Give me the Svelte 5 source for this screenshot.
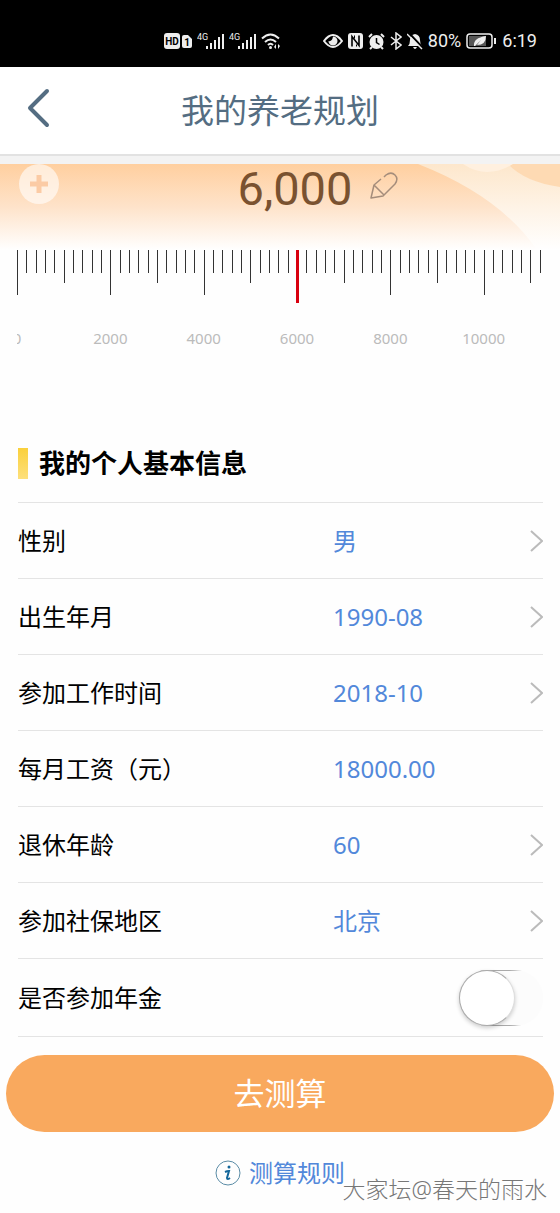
<script lang="ts">
  type Row = { id: string; label: string; value: string; editable?: boolean };

  let amount = $state(6000);
  let annuity = $state(false);

  let rows: Row[] = $state([
    { id: 'gender', label: '性别', value: '男' },
    { id: 'birth', label: '出生年月', value: '1990-08' },
    { id: 'work', label: '参加工作时间', value: '2018-10' },
    { id: 'salary', label: '每月工资（元）', value: '18000.00', editable: true },
    { id: 'retire', label: '退休年龄', value: '60' },
    { id: 'region', label: '参加社保地区', value: '北京' },
  ]);

  // one tick per 200, a long one every 2000
  const STEP = 28 / 3;
  const ticks = Array.from({ length: 57 }, (_, i) => i);
  const marks = [0, 2000, 4000, 6000, 8000, 10000];
  const bars = [0, 1, 2, 3, 4];

  function tickHeight(i: number) {
    if (i % 10 === 0) return 45;
    if (i % 5 === 0) return 33;
    return 23;
  }
</script>

<div class="page">
  <div class="status">
    <div class="status-group">
      <svg width="28" height="16" viewBox="0 0 28 16">
        <rect x="0" y="0" width="16" height="16" rx="3" fill="#eee" />
        <text x="8" y="12" class="hd">HD</text>
        <path d="M18 4q0-2 2-2h4l4 4v7q0 2-2 2h-6q-2 0-2-2z" fill="#eee" />
        <text x="23" y="13" class="hd">1</text>
      </svg>
      {#each [0, 1] as sim}
        <svg width="27" height="18" viewBox="0 0 27 18">
          <text x="0" y="8" class="net">4G</text>
          {#each bars as b}
            <rect x={9 + b * 4} y={14 - b * 3} width="2" height={3 + b * 3} fill="#eee" />
          {/each}
        </svg>
      {/each}
      <svg width="20" height="17" viewBox="0 0 20 17" fill="none" stroke="#eee" stroke-width="2">
        <path d="M1 5.500Q9.500-2.500 18 5.500M4 9Q9.500 4 15 9M7 12Q9.500 9.500 12 12" />
        <circle cx="9.500" cy="14.500" r="1.500" fill="#eee" stroke="none" />
        <path d="M13 14l2-3v5zM19 13l-2 3v-5z" fill="#eee" stroke="none" />
      </svg>
    </div>
    <div class="status-group">
      <svg width="20" height="14" viewBox="0 0 20 14">
        <path d="M1 7Q10-5 19 7Q10 19 1 7z" fill="none" stroke="#eee" stroke-width="2" />
        <path d="M10 2.500A4.500 4.500 0 1 1 5.500 7Q9 8 10 2.500z" fill="#eee" />
      </svg>
      <svg width="15" height="16" viewBox="0 0 15 16">
        <rect width="15" height="16" rx="3" fill="#eee" />
        <path d="M4 13.500V3.500l7 9V2.500" fill="none" stroke="#000" stroke-width="1.600" />
        <path d="M6.500 2.500v3M8.500 13.500v-2" fill="none" stroke="#000" />
      </svg>
      <svg width="17" height="17" viewBox="0 0 17 17">
        <circle cx="8.500" cy="9" r="7" fill="#eee" />
        <path d="M1 4l3-3M16 4l-3-3M4 14l-2 2M13 14l2 2" stroke="#eee" stroke-width="2" />
        <path d="M8.500 5v4.500l3 2" fill="none" stroke="#000" stroke-width="1.500" />
      </svg>
      <svg width="12" height="18" viewBox="0 0 12 18">
        <path d="M1 5l10 8-5 4V1l5 4-10 8" fill="none" stroke="#eee" stroke-width="1.500" />
      </svg>
      <svg width="16" height="17" viewBox="0 0 16 17">
        <path d="M1 13q2-2 2-6 0-5 5-6 5 1 5 6 0 4 2 6zM6 14h4q-2 4-4 0z" fill="#eee" />
        <path d="M2 0l14 15" stroke="#000" stroke-width="2" />
        <path d="M0 1l15 15" stroke="#eee" stroke-width="1.500" />
      </svg>
      <span class="status-text">80%</span>
      <svg width="31" height="16" viewBox="0 0 31 16">
        <rect x="1" y="1" width="25" height="14" rx="3" fill="none" stroke="#eee" stroke-width="1.500" />
        <rect x="3" y="3" width="17" height="10" fill="#555" />
        <path d="M8 13q-1-8 12-10 0 9-9 9l4-5-6 6z" fill="#eee" />
        <path d="M29 5v6" stroke="#eee" stroke-width="2" />
      </svg>
      <span class="status-text">6:19</span>
    </div>
  </div>

  <header class="header">
    <button class="back" aria-label="返回">
      <svg width="24" height="40" viewBox="0 0 24 40">
        <path d="M20 3L3 20l17 17" fill="none" stroke="#546d82" stroke-width="4" stroke-linecap="round" stroke-linejoin="round" />
      </svg>
    </button>
    <h1>我的养老规划</h1>
  </header>

  <div class="hero">
    <svg class="hero-bg" viewBox="0 0 560 86" preserveAspectRatio="none">
      <defs>
        <linearGradient id="warm" x2="0" y2="1">
          <stop offset="0" stop-color="#ffcf9f" />
          <stop offset="0.500" stop-color="#fee3ca" />
          <stop offset="1" stop-color="#fff" />
        </linearGradient>
        <linearGradient id="pale" x2="0" y2="1">
          <stop offset="0" stop-color="#fde7cc" />
          <stop offset="1" stop-color="#fff" />
        </linearGradient>
      </defs>
      <rect width="560" height="86" fill="url(#warm)" />
      <path d="M418 0Q500 32 537 86H560V0z" fill="url(#pale)" />
      <path d="M508 0Q525 18 560 23V0z" fill="#fedab3" />
      <path d="M463 0Q487 16 513 0z" fill="#fff0df" />
    </svg>
    <div class="plus">
      <svg width="18" height="18" viewBox="0 0 18 18">
        <path d="M9 0v18M0 9h18" stroke="#fbcba5" stroke-width="5" />
      </svg>
    </div>
    <div class="amount">
      <span>{amount.toLocaleString('en-US')}</span>
      <button class="edit" aria-label="修改金额">
        <svg width="28" height="28" viewBox="0 0 28 28" fill="none" stroke="#a58d7b" stroke-width="1.500" stroke-linejoin="round">
          <path d="M11 8L4 14 1 27l12-2L25 13c5-7-2-14-9-9l-2 2M4 14l10 10" />
        </svg>
      </button>
    </div>
  </div>

  <div class="ruler">
    <svg viewBox="0 0 525 100">
      {#each ticks as i}
        <rect x={Math.round(i * STEP)} y="0" width="1" height={tickHeight(i)} fill="#333" />
      {/each}
      <rect x={Math.round((amount / 200) * STEP) - 1} y="0" width="3" height="53" fill="#d9000f" />
      {#each marks as m}
        <text x={(m / 200) * STEP} y="94">{m}</text>
      {/each}
    </svg>
    <input type="range" min="0" max="11200" step="200" bind:value={amount} aria-label="金额" />
  </div>

  <section class="info">
    <h2>我的个人基本信息</h2>
    {#each rows as row (row.id)}
      <div class="row">
        <label for={row.id}>{row.label}</label>
        {#if row.editable}
          <input class="value" id={row.id} type="text" bind:value={row.value} />
        {:else}
          <button class="value" id={row.id}>
            {row.value}
            <svg width="13" height="22" viewBox="0 0 13 22">
              <path d="M1 1l11 10L1 21" fill="none" stroke="#bbb" stroke-width="2" />
            </svg>
          </button>
        {/if}
      </div>
    {/each}
    <div class="row">
      <label for="annuity">是否参加年金</label>
      <input class="toggle" id="annuity" type="checkbox" role="switch" bind:checked={annuity} />
    </div>
  </section>

  <div class="footer">
    <button class="submit">去测算</button>
    <a class="rules" href="#rules">
      <svg width="26" height="26" viewBox="0 0 26 26">
        <circle cx="13" cy="13" r="12" fill="none" stroke="#5a8ca6" />
        <circle cx="14" cy="7" r="1.500" fill="#13669a" />
        <path d="M10 12q2-1 4-1l-2 7q0 2 3 0" fill="none" stroke="#13669a" stroke-width="2" />
      </svg>
      测算规则
    </a>
  </div>
  <div class="watermark">大家坛@春天的雨水</div>
</div>

<style>
  :global(body) {
    margin: 0;
    background: #fefefe;
  }
  .page {
    position: relative;
    font-family: "Noto Sans", "Noto Sans CJK SC", sans-serif;
    color: #000;
  }
  button, input {
    font: inherit;
    color: inherit;
    border: 0;
    padding: 0;
    margin: 0;
    background: none;
  }
  svg {
    display: block;
    flex: none;
  }

  .status {
    display: flex;
    justify-content: flex-end;
    align-items: center;
    gap: 42px;
    height: 52px;
    padding: 15px 23px 0 0;
    background: #000;
    font-family: Roboto, sans-serif;
    color: #eee;
  }
  .status-group {
    display: flex;
    align-items: center;
    gap: 5px;
  }
  .status-text {
    font-size: 18px;
    line-height: 20px;
  }
  .hd {
    font-size: 10px;
    font-weight: 700;
    text-anchor: middle;
  }
  .net {
    font-size: 9px;
    fill: #eee;
  }

  .header {
    display: grid;
    grid-template-columns: 60px 1fr 60px;
    align-items: center;
    height: 87px;
    background: #fff;
    border-bottom: 2px solid #e2e2e2;
  }
  .back {
    padding: 0 0 6px 27px;
  }
  h1 {
    margin: 0;
    font-size: 33px;
    font-weight: 400;
    line-height: 48px;
    text-align: center;
    color: #546d82;
  }

  .hero {
    position: relative;
    display: flex;
    justify-content: center;
    height: 86px;
    border-top: 8px solid #f3f3f3;
  }
  .hero-bg {
    position: absolute;
    inset: 0;
    width: 100%;
    height: 100%;
  }
  .plus {
    position: absolute;
    left: 19px;
    top: 0;
    display: grid;
    place-items: center;
    width: 40px;
    height: 40px;
    border-radius: 50%;
    background: #fff9;
  }
  .amount {
    position: relative;
    display: flex;
    align-items: flex-start;
    gap: 18px;
    padding-left: 76px;
    font-family: Roboto, sans-serif;
    font-size: 47px;
    line-height: 50px;
    color: #7a5230;
  }
  .edit {
    padding-top: 7px;
  }

  .ruler {
    position: relative;
    margin: 0 18px 0 17px;
  }
  .ruler svg {
    width: 100%;
  }
  .ruler text {
    font-size: 15px;
    text-anchor: middle;
    fill: #bbb;
  }
  .ruler input {
    position: absolute;
    inset: 0;
    width: 100%;
    height: 52px;
    opacity: 0;
  }

  .info {
    padding: 93px 17px 0 18px;
  }
  h2 {
    display: flex;
    align-items: center;
    gap: 11px;
    margin: 0;
    padding-bottom: 19px;
    font-size: 26px;
    line-height: 40px;
  }
  h2::before {
    content: "";
    width: 10px;
    height: 31px;
    background: linear-gradient(#fad03c, #fde07c);
  }
  .row {
    display: grid;
    grid-template-columns: 3fr 2fr;
    align-items: center;
    height: 75px;
    border-top: 1px solid #e4e4e4;
    font-size: 24px;
    line-height: 36px;
  }
  .row:last-child {
    height: 77px;
    border-bottom: 1px solid #e4e4e4;
  }
  .value {
    display: flex;
    justify-content: space-between;
    align-items: center;
    width: 100%;
    min-width: 0;
    text-align: left;
    color: #5288da;
  }
  .toggle {
    appearance: none;
    justify-self: end;
    display: flex;
    width: 84px;
    height: 56px;
    border-radius: 28px;
    background:
      linear-gradient(90deg, #aaa 60%, #aaa0 80%) top / 100% 1px no-repeat,
      linear-gradient(90deg, #aaa 60%, #aaa0 80%) bottom / 100% 1px no-repeat,
      #fcfcfc;
  }
  .toggle::before {
    content: "";
    box-sizing: border-box;
    width: 56px;
    height: 56px;
    border: 1px solid #aaa;
    border-right-color: #ddd;
    border-radius: 50%;
    background: #fff;
    box-shadow: 0 2px 4px #0003;
  }
  .toggle:checked {
    justify-content: flex-end;
    background: #f9a95e;
  }

  .footer {
    display: flex;
    flex-direction: column;
    align-items: center;
    gap: 23px;
    padding: 18px 6px 22px;
  }
  .submit {
    width: 100%;
    height: 77px;
    padding-bottom: 2px;
    border-radius: 39px;
    background: #f9a95e;
    font-size: 31px;
    line-height: 44px;
    color: #fff;
  }
  .rules {
    display: flex;
    align-items: center;
    gap: 8px;
    font-size: 24px;
    line-height: 36px;
    color: #5288da;
    text-decoration: none;
  }
  .watermark {
    position: absolute;
    right: 13px;
    bottom: 7px;
    font-size: 23px;
    font-weight: 300;
    line-height: 34px;
    color: #777;
    text-shadow: 1px 1px 1px #fff;
  }
</style>
